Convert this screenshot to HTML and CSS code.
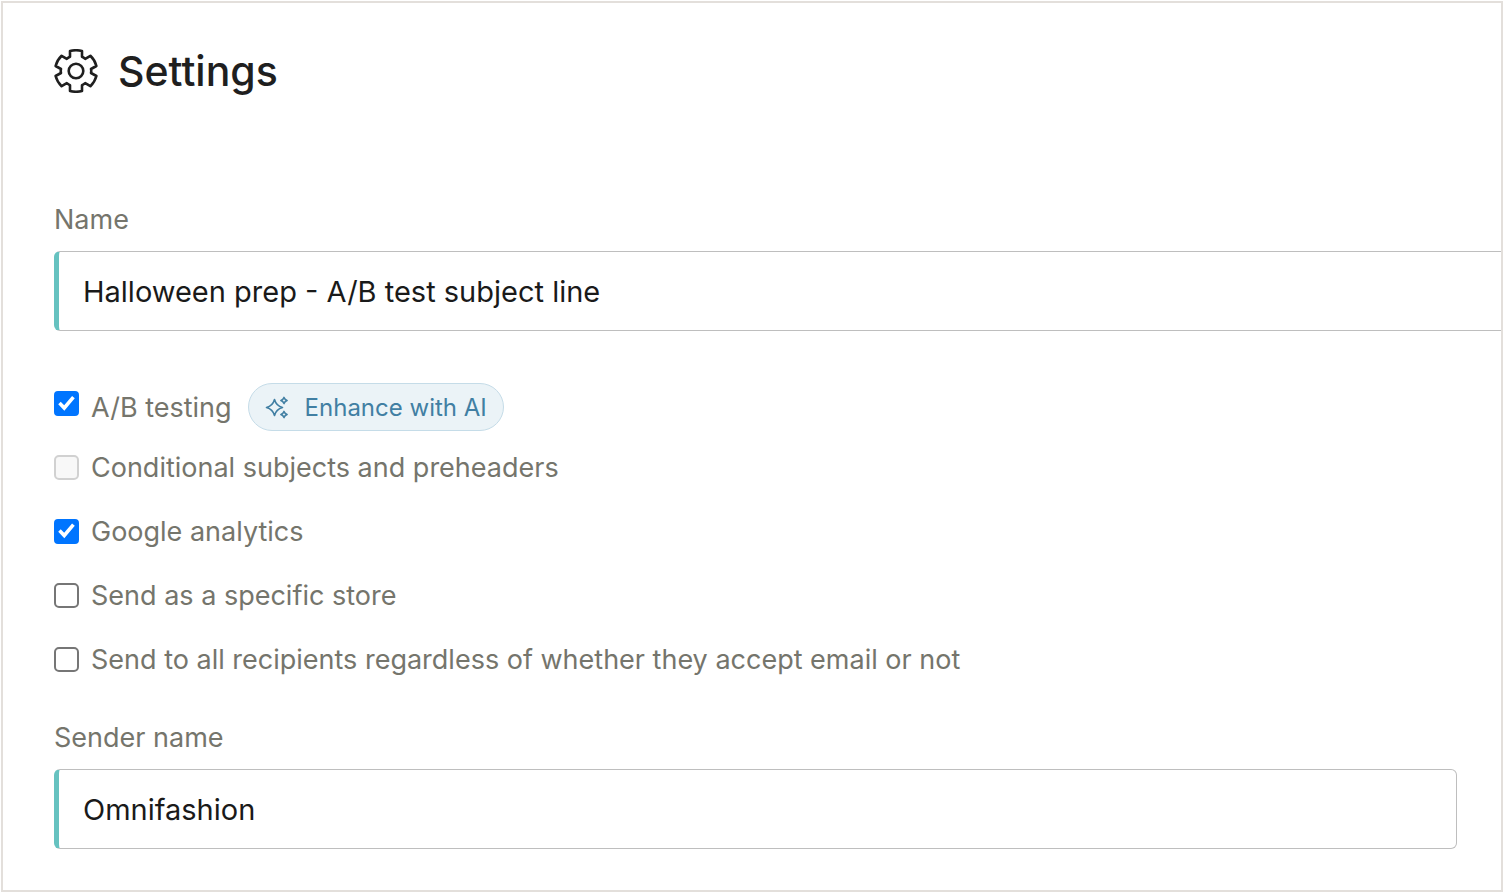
FILE: index.html
```html
<!DOCTYPE html>
<html lang="en">
<head>
    <title>Settings</title>
    <meta charset="utf-8">
    <meta name="viewport" content="width=device-width, initial-scale=1">
    <link rel="stylesheet" href="styles.css">
</head>
<body>
<main class="panel">
    <header class="header">
        <svg class="gear" viewBox="-22 -22 44 44" aria-hidden="true">
            <path d="M-6 -20 Q0 -21.5 6 -20 V-14.2 Q7.7 -13.5 9.2 -12.1 L14.4 -15.2 Q18.8 -11 20.4 -5 L15 -2 Q15.5 0 15 2 L20.4 5 Q18.8 11 14.4 15.2 L9.2 12.1 Q7.7 13.5 6 14.2 V20 Q0 21.5 -6 20 V14.2 Q-7.7 13.5 -9.2 12.1 L-14.4 15.2 Q-18.8 11 -20.4 5 L-15 2 Q-15.5 0 -15 -2 L-20.4 -5 Q-18.8 -11 -14.4 -15.2 L-9.2 -12.1 Q-7.7 -13.5 -6 -14.2 Z"/>
            <circle r="7.3"/>
        </svg>
        <h1>Settings</h1>
    </header>

    <form>
        <div class="field wide">
            <label for="name">Name</label>
            <input id="name" type="text" value="Halloween prep - A/B test subject line">
        </div>

        <div class="options">
            <div class="option with-ai">
                <input id="abTesting" type="checkbox" checked>
                <label for="abTesting">A/B testing</label>
                <button class="ai-button" type="button">
                    <svg class="sparkles" viewBox="0 0 24 24" aria-hidden="true">
                        <path d="M9.5 4.5 Q11.2 10.8 17.5 12.5 Q11.2 14.2 9.5 20.5 Q7.8 14.2 1.5 12.5 Q7.8 10.8 9.5 4.5 Z"/>
                        <path d="M19 2.4 Q19.8 4.7 22.1 5.5 Q19.8 6.3 19 8.6 Q18.2 6.3 15.9 5.5 Q18.2 4.7 19 2.4 Z"/>
                        <path d="M19 16.4 Q19.8 18.7 22.1 19.5 Q19.8 20.3 19 22.6 Q18.2 20.3 15.9 19.5 Q18.2 18.7 19 16.4 Z"/>
                    </svg>
                    Enhance with AI
                </button>
            </div>
            <div class="option">
                <input id="conditional" type="checkbox" disabled>
                <label for="conditional">Conditional subjects and preheaders</label>
            </div>
            <div class="option">
                <input id="analytics" type="checkbox" checked>
                <label for="analytics">Google analytics</label>
            </div>
            <div class="option">
                <input id="store" type="checkbox">
                <label for="store">Send as a specific store</label>
            </div>
            <div class="option">
                <input id="sendAll" type="checkbox">
                <label for="sendAll">Send to all recipients regardless of whether they accept email or not</label>
            </div>
        </div>

        <div class="field">
            <label for="sender">Sender name</label>
            <input id="sender" type="text" value="Omnifashion">
        </div>
    </form>
</main>
</body>
</html>
```

FILE: styles.css
```css
* {
    box-sizing: border-box;
}

body {
    margin: 0;
    padding: 1px;
    background: white;
    color: #75756c;
    font-family: Inter, "Liberation Sans", sans-serif;
    font-size: 27px;
}

.panel {
    min-height: calc(100vh - 2px);
    padding: 40px 0 40px 51px;
    border: 2px solid #e3dfdb;
}

.header {
    display: flex;
    align-items: center;
    gap: 20px;
    margin-bottom: 105px;
}

.gear {
    width: 44px;
    height: 44px;
    fill: none;
    stroke: #1f1f1f;
    stroke-width: 2.6;
    stroke-linejoin: round;
}

h1 {
    margin: 0;
    color: #1f1f1f;
    font-size: 41px;
    font-weight: 500;
    line-height: 56px;
}

.field {
    padding-right: 44px;
}

/* runs on to the edge of the panel */
.field.wide {
    padding-right: 0;
}

.field label {
    display: block;
    margin-bottom: 15px;
    line-height: 32px;
}

.field input {
    display: block;
    width: 100%;
    height: 80px;
    padding: 0 24px;
    border: 1px solid #bebebe;
    border-left: 5px solid #66c2c0;
    border-radius: 6px;
    background: white;
    color: #1a1a1a;
    font: inherit;
    font-size: 29px;
}

.field.wide input {
    border-right: 0;
    border-radius: 6px 0 0 6px;
}

.options {
    margin: 52px 0 31px;
}

.option {
    display: flex;
    align-items: center;
    gap: 12px;
    height: 64px;
}

.option.with-ai {
    height: 48px;
    margin-bottom: 4px;
}

.option input {
    appearance: none;
    display: grid;
    place-items: center;
    flex: none;
    width: 25px;
    height: 25px;
    margin: 0;
    border: 2px solid #767676;
    border-radius: 5px;
    background: white;
}

.option.with-ai input {
    margin-bottom: 7px;
}

.option input:checked {
    border-color: #0075ff;
    border-radius: 4px;
    background: #0075ff;
}

.option input:checked::before {
    content: "";
    width: 18px;
    height: 18px;
    background: white;
    clip-path: polygon(4% 54%, 18% 40%, 37% 60%, 81% 8%, 96% 21%, 38% 90%);
}

.option input:disabled {
    border-color: #d1d1d1;
    background: #f8f8f8;
}

.ai-button {
    display: flex;
    align-items: center;
    gap: 16px;
    height: 48px;
    margin-left: 4px;
    padding: 0 16px;
    border: 1px solid #c5dce8;
    border-radius: 24px;
    background: #ebf3f7;
    color: #417fa3;
    font: inherit;
    font-size: 24px;
}

.sparkles {
    width: 24px;
    height: 24px;
    fill: none;
    stroke: #417fa3;
    stroke-width: 1.6;
    stroke-linejoin: round;
}
```
